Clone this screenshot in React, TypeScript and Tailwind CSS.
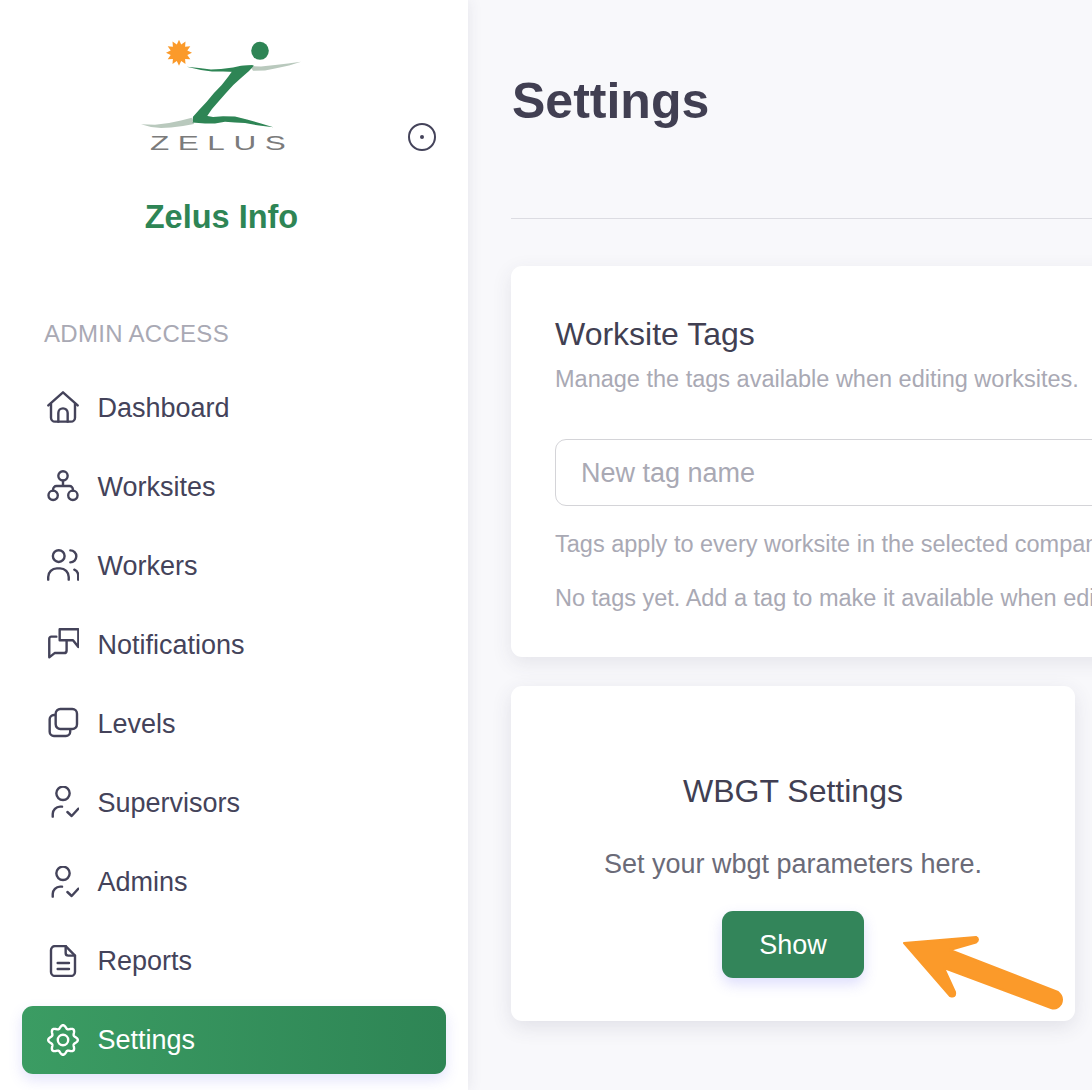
import React from "react";

const stroke = { fill: "none", stroke: "currentColor", strokeWidth: 1.8, strokeLinecap: "round", strokeLinejoin: "round" } as const;

const gearPath = (() => {
  const pts: string[] = [];
  for (let i = 0; i < 160; i++) {
    const t = (i / 160) * Math.PI * 2;
    const r = 9.9 + 1.2 * Math.cos(8 * t);
    pts.push(`${(12 + r * Math.sin(t)).toFixed(2)} ${(12 - r * Math.cos(t)).toFixed(2)}`);
  }
  return `M${pts.join("L")}Z`;
})();

const sunPoints = (() => {
  const pts: string[] = [];
  for (let i = 0; i < 24; i++) {
    const t = (i / 24) * Math.PI * 2;
    const r = i % 2 === 0 ? 13 : 8.6;
    pts.push(`${(38 + r * Math.sin(t)).toFixed(1)},${(12.8 - r * Math.cos(t)).toFixed(1)}`);
  }
  return pts.join(" ");
})();

const Icon = ({ children }: { children: React.ReactNode }) => (
  <svg viewBox="0 0 24 24" className="w-8 h-8 shrink-0" {...stroke}>{children}</svg>
);

const checkUser = (
  <>
    <circle cx="12" cy="5.5" r="5" />
    <path d="M4.3 23v-2a5.5 5.5 0 0 1 5.5-5.5h1.5" />
    <path d="M15.3 19.5l3.2 3L23.6 17" />
  </>
);

const icons: Record<string, React.ReactNode> = {
  Dashboard: <><path d="M1 10.8 12 1l11 9.8" /><path d="M3 9.5v10.5a3 3 0 0 0 3 3h12a3 3 0 0 0 3-3V9.5" /><path d="M8.5 23v-6.5a3.5 3.5 0 0 1 7 0V23" /></>,
  Worksites: <><circle cx="12" cy="4.4" r="3.5" /><circle cx="4.6" cy="19" r="3.5" /><circle cx="19.4" cy="19" r="3.5" /><path d="M12 8v4M4.6 15.5v-1a2.5 2.5 0 0 1 2.5-2.5h9.8a2.5 2.5 0 0 1 2.5 2.5v1" /></>,
  Workers: <><circle cx="8.8" cy="5.3" r="4.4" /><path d="M.9 23v-2a6.5 6.5 0 0 1 6.5-6.5h2.4a6.5 6.5 0 0 1 6.5 6.5v2" /><path d="M17.5 1a4.5 4.5 0 0 1 0 9M20.5 15.5a5 5 0 0 1 2.9 5V23" /></>,
  Notifications: <><path d="M9.5 8.8V.9h14v13.3l-4-5H9.5" /><path d="M7 6.5H3.2a1.5 1.5 0 0 0-1.5 1.5v14l4-3.2h7a2 2 0 0 0 2-2V9.5" /></>,
  Levels: <><rect x="6.5" y="1.5" width="16" height="15" rx="3.5" /><path d="M6 6H5.2a3.2 3.2 0 0 0-3.2 3.2V18.5a3.2 3.2 0 0 0 3.2 3.2h9a3.2 3.2 0 0 0 3.2-3.2v-1.5" /></>,
  Supervisors: checkUser,
  Admins: checkUser,
  Reports: <><path d="M14 .8H6a3 3 0 0 0-3 3v16.4a3 3 0 0 0 3 3h12a3 3 0 0 0 3-3V8z" /><path d="M14 .8V6a2 2 0 0 0 2 2h5" /><path d="M8 13.5h8.5M8 18h8.5" /></>,
  Settings: <><path d={gearPath} /><circle cx="12" cy="12" r="3.9" /></>,
};

const nav = ["Dashboard", "Worksites", "Workers", "Notifications", "Levels", "Supervisors", "Admins", "Reports", "Settings"];

const Logo = () => (
  <svg viewBox="0 0 162 112" className="w-[162px] h-[112px] shrink-0">
    <polygon fill="#fb9a2a" points={sunPoints} />
    <ellipse cx="119" cy="10.8" rx="8.8" ry="9" fill="#2e8555" />
    <polygon fill="#b9c9bd" points="109,26 120,26.5 134,25 147,23.5 160,21.7 148,25.5 134,28.6 124,30.5 112,30.8" />
    <polygon fill="#2e8555" points="45.7,26.7 58,28 70,29.6 80,29 92,27.6 100,25.8 112,25 110,28.5 100,31 94,32 82,31.6 71,31.4 60,30" />
    <polygon fill="#2e8555" points="92,30 100,26 113,25.6 108,31 100,38 92.3,45 85,53 77.3,61.7 71,69 65.7,76.7 58,81 51.3,82.5 52,76.7 58,70 65.7,61.7 73,53 80.7,45 87,37" />
    <polygon fill="#b9c9bd" points="0,84.3 14,84.8 28,83 40,80.5 50.7,77.7 53,84 42,86 30,87.6 20,88 10,87" />
    <polygon fill="#2e8555" points="51.3,82.5 56,78 64,75.5 72,77 82,76.2 94,76.5 106,79.4 120,83.6 132.3,87.3 118,85.6 104,83 94,82.4 84,81.8 74,83.6 64,83.6" />
    <text transform="translate(9 110) scale(1.5 1)" letterSpacing="5.7" fontFamily="Liberation Sans, sans-serif" fontSize="21" fill="#7b7b7b">ZELUS</text>
  </svg>
);

export default function App() {
  return (
    <div className="flex h-[1090px] w-full overflow-hidden bg-[#f8f8fb] text-[#44435a] font-['Liberation_Sans',sans-serif]">
      <aside className="w-[468px] shrink-0 bg-white shadow-[0_0_14px_rgba(60,60,90,0.1)] flex flex-col">
        <div className="flex items-end pt-10 pl-[141px] pr-8">
          <Logo />
          <button className="ml-auto mb-[1px] flex w-7 h-7 items-center justify-center rounded-full border-2 border-[#44435a]">
            <span className="w-1 h-1 rounded-full bg-[#44435a]" />
          </button>
        </div>
        <div className="mt-[44px] pl-[1px] text-center w-[442px] text-[32.5px] leading-[42px] font-bold text-[#2e8555]">Zelus Info</div>
        <div className="mt-[81px] pl-11 text-[24px] leading-[30px] tracking-[0.3px] text-[#a9a9b4]">ADMIN ACCESS</div>
        <nav className="mt-6 ml-[22px] w-[424px] flex flex-col gap-[11.1px]">
          {nav.map((n) => (
            <div
              key={n}
              className={
                n === "Settings"
                  ? "h-[68px] flex items-center gap-[18.5px] pl-[25px] rounded-[11px] text-white bg-gradient-to-r from-[#3b9c63] to-[#2e8555] shadow-[0_6px_14px_rgba(99,102,241,0.18)]"
                  : "h-[68px] flex items-center gap-[18.5px] pl-[25px] rounded-[11px]"
              }
            >
              <Icon>{icons[n]}</Icon>
              <span className="pt-px text-[27px] leading-[36px]">{n}</span>
            </div>
          ))}
        </nav>
      </aside>
      <main className="relative flex-1 min-w-0 pl-[43px]">
        <h1 className="mt-[69px] ml-px text-[50px] leading-[64px] font-bold text-[#413f52]">Settings</h1>
        <div className="mt-[85px] w-[900px] h-px bg-[#dcdce2]" />
        <section className="mt-[47px] w-[900px] h-[391px] rounded-[11px] bg-white shadow-[0_6px_20px_rgba(60,60,90,0.1)] pl-11 pt-[48px]">
          <h2 className="text-[32px] leading-[40px] text-[#413f52]">Worksite Tags</h2>
          <p className="mt-[10px] text-[23.5px] leading-[30px] text-[#a9a9b4] whitespace-nowrap">Manage the tags available when editing worksites.</p>
          <input
            readOnly
            placeholder="New tag name"
            className="block mt-[45px] w-[800px] h-[67px] rounded-[11px] border border-[#d4d4d8] pl-[25px] pt-[2px] text-[27px] outline-none placeholder:text-[#a9a9b4]"
          />
          <p className="mt-[23px] text-[23.5px] leading-[30px] text-[#a9a9b4] whitespace-nowrap">Tags apply to every worksite in the selected company.</p>
          <p className="mt-6 text-[23.5px] leading-[30px] text-[#a9a9b4] whitespace-nowrap">No tags yet. Add a tag to make it available when editing worksites.</p>
        </section>
        <section className="mt-[29px] w-[564px] h-[335px] rounded-[11px] bg-white shadow-[0_6px_20px_rgba(60,60,90,0.12)] flex flex-col items-center pt-[84px]">
          <h2 className="text-[32px] leading-[42px] text-[#413f52]">WBGT Settings</h2>
          <p className="mt-[34px] text-[27px] leading-[36px] text-[#6b6b78]">Set your wbgt parameters here.</p>
          <button className="mt-[29px] w-[142px] h-[67px] pt-[2px] rounded-[11px] bg-[#33855a] text-white text-[27px] shadow-[0_6px_14px_rgba(99,102,241,0.22)]">Show</button>
        </section>
        <svg className="absolute left-[430px] top-[930px] w-[190px] h-[90px]" viewBox="0 0 190 90">
          <path
            d="M6 13 L78 7 Q82 9 78 12.5 L52 20 L160 62 Q166 67 163 74 Q159 80 153 78 L46 38 L57 62 Q58 68 52 66 Z"
            fill="#fb9a2a"
            stroke="#fb9a2a"
            strokeWidth="2"
            strokeLinejoin="round"
          />
        </svg>
      </main>
    </div>
  );
}
